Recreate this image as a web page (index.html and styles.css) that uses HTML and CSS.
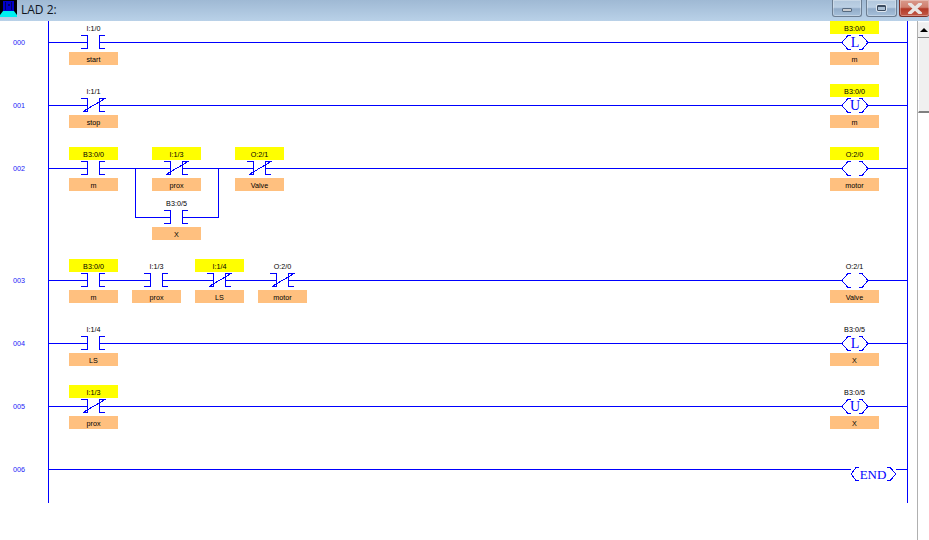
FILE: index.html
```html
<!DOCTYPE html>
<html lang="en">
<head>
<meta charset="utf-8">
<title>LAD 2:</title>
<link rel="stylesheet" href="styles.css">
</head>
<body>
<div class="window">
  <header class="titlebar">
    <svg class="app-icon" width="17" height="17" viewBox="0 0 17 17">
      <rect class="i-black" width="17" height="17"/>
      <rect class="i-blue" x="3" y="1" width="11" height="10"/>
      <rect class="i-dark" x="5" y="2" width="1" height="8"/>
      <rect class="i-dark" x="11" y="2" width="1" height="8"/>
      <rect class="i-dark" x="8" y="4" width="2" height="2"/>
      <polygon class="i-cyan" points="3,11 14,11 17,15 17,17 0,17 0,15"/>
    </svg>
    <span class="title">LAD 2:</span>
    <div class="controls">
      <div class="btn btn-min"><span class="glyph-min"></span></div>
      <div class="btn btn-max"><span class="glyph-max"></span></div>
      <div class="btn btn-close"><svg width="14" height="11" viewBox="0 0 14 11"><path class="x-mark" d="M2 1 L12 10 M12 1 L2 10"/></svg></div>
    </div>
  </header>
  <main class="body">
    <svg class="ladder" width="917" height="519" viewBox="0 21 917 519">
      <defs>
        <g id="no">
          <path class="w" d="M12 -7H18V6H12 M36 -7H30V6H36"/>
        </g>
        <g id="nc">
          <path class="w" d="M12 -7H18V6H14 M36 -7H30V6H36"/>
          <path class="w" d="M14 6.5L37 -7M33 -7H37"/>
        </g>
        <path id="coil" class="w" d="M22 -7H19L13 0L19 7H22 M30 -7H33L39 0L33 7H30"/>
      </defs>

      <!-- rails and rungs -->
      <path class="w" d="M48.5 21V503 M907.5 21V503"/>
      <path class="w" d="M49 42.5H87 M99 42.5H842 M868 42.5H907"/>
      <path class="w" d="M49 105.5H87 M99 105.5H842 M868 105.5H907"/>
      <path class="w" d="M49 168.5H87 M99 168.5H170 M182 168.5H253 M265 168.5H842 M868 168.5H907"/>
      <path class="w" d="M135.5 168V217.5H170 M182 217.5H218.5V168"/>
      <path class="w" d="M49 280.5H87 M99 280.5H150 M162 280.5H213 M225 280.5H276 M288 280.5H842 M868 280.5H907"/>
      <path class="w" d="M49 343.5H87 M99 343.5H842 M868 343.5H907"/>
      <path class="w" d="M49 406.5H87 M99 406.5H842 M868 406.5H907"/>
      <path class="w" d="M49 469.5H851 M896 469.5H907"/>

      <!-- rung numbers -->
      <text class="num" x="13" y="45">000</text>
      <text class="num" x="13" y="108">001</text>
      <text class="num" x="13" y="171">002</text>
      <text class="num" x="13" y="283">003</text>
      <text class="num" x="13" y="346">004</text>
      <text class="num" x="13" y="409">005</text>
      <text class="num" x="13" y="472">006</text>

      <!-- yellow address highlights -->
      <rect class="yel" x="830" y="21" width="49" height="13"/>
      <rect class="yel" x="830" y="84" width="49" height="13"/>
      <rect class="yel" x="69" y="147" width="49" height="13"/>
      <rect class="yel" x="152" y="147" width="49" height="13"/>
      <rect class="yel" x="235" y="147" width="49" height="13"/>
      <rect class="yel" x="830" y="147" width="49" height="13"/>
      <rect class="yel" x="69" y="259" width="49" height="13"/>
      <rect class="yel" x="195" y="259" width="49" height="13"/>
      <rect class="yel" x="69" y="385" width="49" height="13"/>

      <!-- orange symbol labels -->
      <rect class="org" x="69" y="52" width="49" height="13"/>
      <rect class="org" x="830" y="52" width="49" height="13"/>
      <rect class="org" x="69" y="115" width="49" height="13"/>
      <rect class="org" x="830" y="115" width="49" height="13"/>
      <rect class="org" x="69" y="178" width="49" height="13"/>
      <rect class="org" x="152" y="178" width="49" height="13"/>
      <rect class="org" x="235" y="178" width="49" height="13"/>
      <rect class="org" x="830" y="178" width="49" height="13"/>
      <rect class="org" x="152" y="227" width="49" height="13"/>
      <rect class="org" x="69" y="290" width="49" height="13"/>
      <rect class="org" x="132" y="290" width="49" height="13"/>
      <rect class="org" x="195" y="290" width="49" height="13"/>
      <rect class="org" x="258" y="290" width="49" height="13"/>
      <rect class="org" x="830" y="290" width="49" height="13"/>
      <rect class="org" x="69" y="353" width="49" height="13"/>
      <rect class="org" x="830" y="353" width="49" height="13"/>
      <rect class="org" x="69" y="416" width="49" height="13"/>
      <rect class="org" x="830" y="416" width="49" height="13"/>

      <!-- contacts -->
      <use href="#no" x="69" y="42"/>
      <use href="#nc" x="69" y="105"/>
      <use href="#no" x="69" y="168"/>
      <use href="#nc" x="152" y="168"/>
      <use href="#nc" x="235" y="168"/>
      <use href="#no" x="152" y="217"/>
      <use href="#no" x="69" y="280"/>
      <use href="#no" x="132" y="280"/>
      <use href="#nc" x="195" y="280"/>
      <use href="#nc" x="258" y="280"/>
      <use href="#no" x="69" y="343"/>
      <use href="#nc" x="69" y="406"/>

      <!-- coils -->
      <use href="#coil" x="829" y="42.5"/>
      <use href="#coil" x="829" y="105.5"/>
      <use href="#coil" x="829" y="168.5"/>
      <use href="#coil" x="829" y="280.5"/>
      <use href="#coil" x="829" y="343.5"/>
      <use href="#coil" x="829" y="406.5"/>
      <text class="coil-letter" x="855" y="47">L</text>
      <text class="coil-letter" x="855" y="110">U</text>
      <text class="coil-letter" x="855" y="348">L</text>
      <text class="coil-letter" x="855" y="411">U</text>

      <!-- END -->
      <path class="w" d="M859 467.5H856L851 474L856 480.5H859 M887 467.5H890L896 474L890 480.5H887"/>
      <text class="end-text" x="873" y="478.500">END</text>

      <!-- addresses -->
      <text class="t" x="93.500" y="31">I:1/0</text>
      <text class="t" x="854.500" y="31">B3:0/0</text>
      <text class="t" x="93.500" y="94">I:1/1</text>
      <text class="t" x="854.500" y="94">B3:0/0</text>
      <text class="t" x="93.500" y="157">B3:0/0</text>
      <text class="t" x="176.500" y="157">I:1/3</text>
      <text class="t" x="259.500" y="157">O:2/1</text>
      <text class="t" x="854.500" y="157">O:2/0</text>
      <text class="t" x="176.500" y="206">B3:0/5</text>
      <text class="t" x="93.500" y="269">B3:0/0</text>
      <text class="t" x="156.500" y="269">I:1/3</text>
      <text class="t" x="219.500" y="269">I:1/4</text>
      <text class="t" x="282.500" y="269">O:2/0</text>
      <text class="t" x="854.500" y="269">O:2/1</text>
      <text class="t" x="93.500" y="332">I:1/4</text>
      <text class="t" x="854.500" y="332">B3:0/5</text>
      <text class="t" x="93.500" y="395">I:1/3</text>
      <text class="t" x="854.500" y="395">B3:0/5</text>

      <!-- symbols -->
      <text class="t" x="93.500" y="62">start</text>
      <text class="t" x="854.500" y="62">m</text>
      <text class="t" x="93.500" y="125">stop</text>
      <text class="t" x="854.500" y="125">m</text>
      <text class="t" x="93.500" y="188">m</text>
      <text class="t" x="176.500" y="188">prox</text>
      <text class="t" x="259.500" y="188">Valve</text>
      <text class="t" x="854.500" y="188">motor</text>
      <text class="t" x="176.500" y="237">X</text>
      <text class="t" x="93.500" y="300">m</text>
      <text class="t" x="156.500" y="300">prox</text>
      <text class="t" x="219.500" y="300">LS</text>
      <text class="t" x="282.500" y="300">motor</text>
      <text class="t" x="854.500" y="300">Valve</text>
      <text class="t" x="93.500" y="363">LS</text>
      <text class="t" x="854.500" y="363">X</text>
      <text class="t" x="93.500" y="426">prox</text>
      <text class="t" x="854.500" y="426">X</text>
    </svg>
    <aside class="scrollbar">
      <div class="sb-up"><span class="sb-arrow"></span></div>
      <div class="sb-track"></div>
      <div class="sb-rest"></div>
    </aside>
  </main>
</div>
</body>
</html>
```

FILE: styles.css
```css
html, body {
  margin: 0;
  padding: 0;
  background: #fff;
  overflow: hidden;
}
.window {
  width: 929px;
  height: 540px;
  display: flex;
  flex-direction: column;
  font-family: "Liberation Sans", Arial, sans-serif;
}
.titlebar {
  height: 21px;
  flex: none;
  display: flex;
  align-items: flex-start;
  background: linear-gradient(#9fb9d4, #b9d1e8);
}
.app-icon { flex: none; display: block; }
.i-black { fill: #000; }
.i-blue { fill: #0000c8; }
.i-dark { fill: #000060; }
.i-cyan { fill: #00f0f0; }
.title {
  margin-left: 4px;
  font: 12px/19px "Open Sans", "Noto Sans", sans-serif;
  color: #10161e;
}
.controls {
  margin-left: auto;
  display: flex;
}
.btn {
  height: 17px;
  display: flex;
  align-items: center;
  justify-content: center;
  box-sizing: border-box;
  border: 1px solid #6c7e92;
  border-top: 0;
  border-radius: 0 0 3px 3px;
  background: linear-gradient(#b0c6dc 0, #bcd0e4 45%, #92acc8 55%, #a6c0da 100%);
  box-shadow: inset 0 0 0 1px rgba(255, 255, 255, .3);
}
.btn-min { width: 30px; margin-right: 4px; }
.btn-max { width: 31px; margin-right: 2px; }
.btn-close {
  width: 30px;
  border-color: #7c3028;
  border-right: 0;
  background: linear-gradient(#d99a8c 0, #d0806f 45%, #b33a28 55%, #c25a48 100%);
}
.glyph-min {
  width: 8px;
  height: 2px;
  border: 1px solid #566a80;
  border-radius: 1px;
  background: #c9ccd0;
  margin-top: 4px;
}
.glyph-max {
  width: 7px;
  height: 3px;
  border: 1px solid #3c4c60;
  border-top-width: 2px;
  border-radius: 1px;
  outline: 1px solid #dfe7ef;
  background: #a9bfd4;
}
.x-mark {
  fill: none;
  stroke: #e8e4e2;
  stroke-width: 3.500;
  stroke-linecap: square;
}
.body {
  flex: 1;
  display: flex;
  min-height: 0;
}
.ladder { display: block; flex: none; }
.w {
  fill: none;
  stroke: #0000ff;
  stroke-width: 1;
  shape-rendering: crispEdges;
}
.yel { fill: #ffff00; }
.org { fill: #ffc07f; }
.num {
  font: 7.200px "Liberation Sans", Arial, sans-serif;
  fill: #2020f8;
}
.t {
  font: 7.200px "Liberation Sans", Arial, sans-serif;
  fill: #000;
  text-anchor: middle;
}
.coil-letter {
  font: 14px "Liberation Serif", "Times New Roman", serif;
  fill: #0000ff;
  text-anchor: middle;
}
.end-text {
  font: 13px "Liberation Serif", "Times New Roman", serif;
  fill: #0000ff;
  text-anchor: middle;
}
.scrollbar {
  width: 12px;
  flex: none;
  display: flex;
  flex-direction: column;
  border-left: 1px solid #b0b0b0;
  box-sizing: border-box;
  background: #fff;
}
.sb-up {
  height: 16px;
  display: flex;
  align-items: center;
  justify-content: center;
  border-top: 1px solid #f4f4f4;
  border-bottom: 1px solid #8a8a8a;
  box-sizing: border-box;
  background: #f0f0f0;
  margin-top: 1px;
}
.sb-arrow {
  width: 0;
  height: 0;
  border-left: 4px solid transparent;
  border-right: 4px solid transparent;
  border-bottom: 4px solid #000;
}
.sb-track {
  height: 73px;
  background: #f0f0f0;
  border-left: 1px solid #fff;
  border-bottom: 2px solid #808080;
}
.sb-rest { flex: 1; background: #fff; }
```
